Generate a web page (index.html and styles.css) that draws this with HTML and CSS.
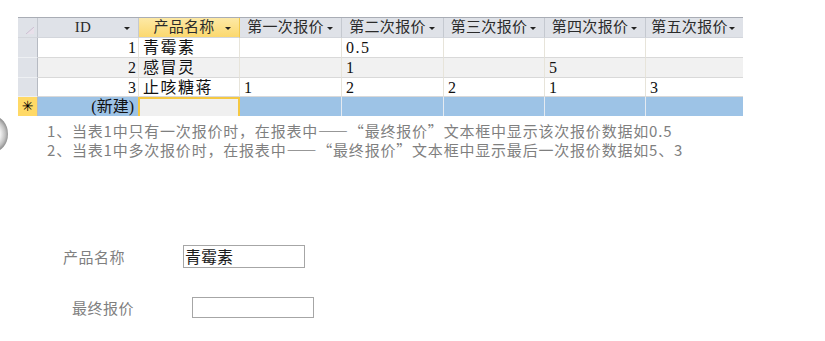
FILE: index.html
```html
<!DOCTYPE html>
<html lang="zh">
<head>
<meta charset="utf-8">
<link rel="stylesheet" href="styles.css">
</head>
<body>
<div class="page">
  <div class="edge-knob"></div>
  <div class="sheet">
    <div class="cell hd sel"><svg class="corner" width="8" height="7" viewBox="0 0 8 7"><path d="M0 7 L8 0 L8 7 Z" fill="#e8e0ea"/><path d="M0 7 L8 0" stroke="#cbbfd2" stroke-width="1"/></svg></div>
    <div class="cell hd"><span class="ht">ID</span><i class="arr"></i></div>
    <div class="cell hd hd-active"><span class="ht">产品名称</span><i class="arr"></i></div>
    <div class="cell hd"><span class="ht">第一次报价</span><i class="arr"></i></div>
    <div class="cell hd"><span class="ht">第二次报价</span><i class="arr"></i></div>
    <div class="cell hd"><span class="ht">第三次报价</span><i class="arr"></i></div>
    <div class="cell hd"><span class="ht">第四次报价</span><i class="arr"></i></div>
    <div class="cell hd last"><span class="ht">第五次报价</span><i class="arr"></i></div>

    <div class="cell rs"></div>
    <div class="cell num">1</div>
    <div class="cell txt">青霉素</div>
    <div class="cell txt"></div>
    <div class="cell txt dg">0.5</div>
    <div class="cell txt"></div>
    <div class="cell txt"></div>
    <div class="cell txt last"></div>

    <div class="cell rs"></div>
    <div class="cell num alt">2</div>
    <div class="cell txt alt">感冒灵</div>
    <div class="cell txt alt"></div>
    <div class="cell txt alt">1</div>
    <div class="cell txt alt"></div>
    <div class="cell txt alt">5</div>
    <div class="cell txt alt last"></div>

    <div class="cell rs"></div>
    <div class="cell num">3</div>
    <div class="cell txt">止咳糖蒋</div>
    <div class="cell txt">1</div>
    <div class="cell txt">2</div>
    <div class="cell txt">2</div>
    <div class="cell txt">1</div>
    <div class="cell txt last">3</div>

    <div class="cell nw-sel">✳</div>
    <div class="cell num nw">(新建)</div>
    <div class="cell nw-focus"></div>
    <div class="cell nw"></div>
    <div class="cell nw"></div>
    <div class="cell nw"></div>
    <div class="cell nw"></div>
    <div class="cell nw last"></div>
  </div>

  <div class="notes">
    <p>1、当表1中只有一次报价时，在报表中——“最终报价”文本框中显示该次报价数据如0.5</p>
    <p>2、当表1中多次报价时，在报表中——“最终报价”文本框中显示最后一次报价数据如5、3</p>
  </div>

  <div class="form">
    <div class="frow frow-1">
      <span class="flabel">产品名称</span>
      <span class="fbox fbox-1">青霉素</span>
    </div>
    <div class="frow frow-2">
      <span class="flabel">最终报价</span>
      <span class="fbox fbox-2"></span>
    </div>
  </div>
</div>
</body>
</html>
```

FILE: styles.css
```css
* { box-sizing: border-box; }
html, body { margin: 0; padding: 0; background: #fff; }
body {
  font-family: "Noto Sans CJK SC", sans-serif;
  width: 825px;
  height: 341px;
  overflow: hidden;
}
.page { position: relative; padding-top: 17px; }

.edge-knob {
  position: absolute;
  left: -22px;
  top: 116px;
  width: 30px;
  height: 36px;
  border-radius: 50%;
  background: radial-gradient(circle at 40% 50%, #ffffff 35%, #c0c0c0 60%, #5e5e5e 85%, #7a7a7a 100%);
}

.sheet {
  margin-left: 18px;
  width: 725px;
  display: grid;
  grid-template-columns: 20px 101px 101px 102px 102px 101px 101px 97px;
  grid-template-rows: 20px 20px 20px 19px 19px;
  border-top: 1px solid #a9adb5;
  font-family: "Liberation Serif", "Noto Sans CJK SC", serif;
  color: #111;
}
.cell {
  border-right: 1px solid #e7e4da;
  border-bottom: 1px solid #d9d9d9;
  overflow: hidden;
  white-space: nowrap;
}
.cell.last { border-right: none; }

.hd {
  background: #dfe2e8;
  border-right: 1px solid #c5c9d0;
  border-bottom: 1px solid #d3d6dc;
  display: flex;
  align-items: center;
  padding: 0 8px 0 4px;
  font-size: 15px;
  color: #2b2b2b;
}
.hd .ht { flex: 1; text-align: center; line-height: 19px; letter-spacing: 0.3px; }
.hd.sel { padding: 0; position: relative; }
.corner { position: absolute; left: 8px; top: 9px; }
.hd-active {
  background: linear-gradient(#fde9a6, #fbd86e);
  border-right: 1px solid #f2c94c;
}
.arr {
  width: 0; height: 0;
  border-left: 3px solid transparent;
  border-right: 3px solid transparent;
  border-top: 3px solid #222;
  margin-top: 1px;
}

.rs {
  background: #dfe2e8;
  border-right: 1px solid #b6bac2;
  border-bottom: 1px solid #eef0f3;
}
.num {
  text-align: right;
  font-size: 16px;
  line-height: 19px;
  padding-right: 2px;
}
.txt {
  font-size: 16px;
  line-height: 19px;
  padding-left: 4px;
  letter-spacing: 1.5px;
}
.alt { background: #f1f1f1; }

.nw-sel {
  background: #ffd966;
  border-right: 1px solid #b6bac2;
  border-bottom: none;
  font-size: 14px;
  line-height: 19px;
  text-align: center;
  color: #000;
  font-weight: bold;
  font-family: "DejaVu Sans", sans-serif;
}
.nw {
  background: #9dc3e6;
  border-right: 1px solid #e4eaf1;
  border-bottom: none;
}
.nw.num { color: #111; padding-right: 4px; letter-spacing: 0; }
.nw-focus {
  background: #f0f0f0;
  border: 2px solid #f5c842;
  border-bottom: none;
  margin-left: -1px;
}

.notes {
  margin: 5px 0 0 47px;
  color: #7f7f7f;
  font-size: 15px;
  line-height: 19px;
  letter-spacing: 0.8px;
}
.notes p { margin: 0; white-space: nowrap; }

.form { margin-top: 86px; color: #7f7f7f; font-size: 15px; }
.frow { display: flex; align-items: center; }
.flabel { width: 120px; letter-spacing: 0.5px; }
.frow-1 { padding-left: 63px; }
.frow-2 { padding-left: 72px; margin-top: 29px; }
.fbox {
  width: 122px;
  border: 1px solid #a6a6a6;
  background: #fff;
}
.fbox-1 {
  height: 23px;
  color: #1a1a1a;
  font-size: 16px;
  line-height: 21px;
  padding-left: 1px;
}
.fbox-2 { height: 21px; }
```
